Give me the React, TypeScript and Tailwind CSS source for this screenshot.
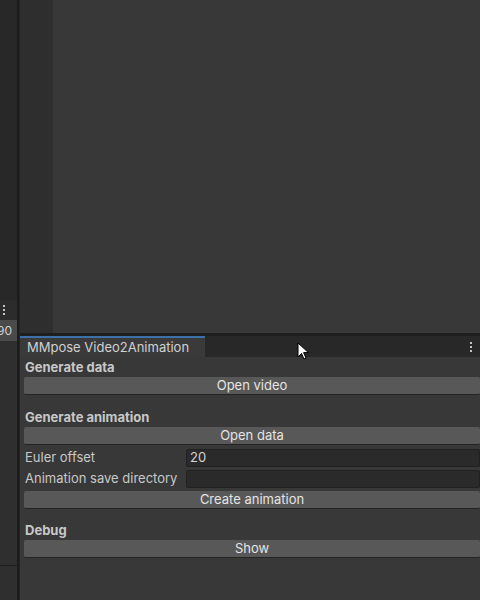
import React from "react";

const font = { fontFamily: "Inter, 'Noto Sans', sans-serif" };

function Btn({ label }: { label: string }) {
  return (
    <div className="h-[18px] ml-[4px] bg-[#585858] border-b border-[#242424] rounded-[2px] flex items-center justify-center text-[13px] text-[#e4e4e4] leading-none">
      {label}
    </div>
  );
}

function Field({ label, value }: { label: string; value: string }) {
  return (
    <div className="flex items-center h-[21px]">
      <div className="w-[166px] pl-[5px] text-[13px] text-[#c8c8c8] leading-none whitespace-nowrap">{label}</div>
      <div className="flex-1 h-[18px] bg-[#2a2a2a] border border-[#212121] rounded-[2px] flex items-center pl-[3px] text-[13px] text-[#d2d2d2] leading-none">
        {value}
      </div>
    </div>
  );
}

function Header({ label, h }: { label: string; h: string }) {
  return (
    <div className={`${h} flex items-center pl-[5px] text-[13px] font-bold text-[#c8c8c8] leading-none`}>
      {label}
    </div>
  );
}

export default function App() {
  return (
    <div className="w-[480px] h-[600px] flex bg-[#383838] overflow-hidden relative" style={font}>
      {/* left column */}
      <div className="w-[17px] flex flex-col shrink-0">
        <div className="h-[300px] bg-[#282828]" />
        <div className="h-[20px] bg-[#2c2c2c] flex items-center pl-[2px]">
          <svg width="4" height="12" viewBox="0 0 4 12">
            <rect x="1" y="1" width="2" height="2" fill="#c4c4c4" />
            <rect x="1" y="5" width="2" height="2" fill="#c4c4c4" />
            <rect x="1" y="9" width="2" height="2" fill="#c4c4c4" />
          </svg>
        </div>
        <div className="h-[21px] bg-[#4a4a4a] overflow-hidden flex items-center justify-end pr-[5px] text-[12px] text-[#d0d0d0] leading-none">
          90
        </div>
        <div className="h-[225px] bg-[#2f2f2f] border-b border-[#1e1e1e]" />
        <div className="flex-1 bg-[#2f2f2f]" />
      </div>
      {/* divider */}
      <div className="w-[3px] shrink-0 bg-[#1c1c1c] border-r border-[#242424]" />
      {/* main */}
      <div className="flex-1 flex flex-col min-w-0">
        <div className="h-[333px] flex">
          <div className="w-[33px] bg-[#2e2e2e]" />
          <div className="flex-1 bg-[#383838]" />
        </div>
        <div className="h-[3px] bg-[#1e1e1e]" />
        <div className="h-[21px] bg-[#282828] flex items-stretch">
          <div className="w-[185px] bg-[#3a3a3a] border-t-2 border-[#3d6fa8] flex items-center pl-[7px] text-[13px] text-[#d0d0d0] leading-none whitespace-nowrap">
            MMpose Video2Animation
          </div>
          <div className="flex-1" />
          <div className="w-[18px] flex items-center justify-center">
            <svg width="4" height="12" viewBox="0 0 4 12">
              <rect x="1" y="1" width="2" height="2" fill="#c4c4c4" />
              <rect x="1" y="5" width="2" height="2" fill="#c4c4c4" />
              <rect x="1" y="9" width="2" height="2" fill="#c4c4c4" />
            </svg>
          </div>
        </div>
        <div className="flex-1 bg-[#383838] flex flex-col pt-[1px]">
          <Header label="Generate data" h="h-[19px]" />
          <Btn label="Open video" />
          <div className="h-[12px]" />
          <Header label="Generate animation" h="h-[20px]" />
          <Btn label="Open data" />
          <div className="h-[2px]" />
          <Field label="Euler offset" value="20" />
          <Field label="Animation save directory" value="" />
          <div className="h-[2px]" />
          <Btn label="Create animation" />
          <div className="h-[11px]" />
          <Header label="Debug" h="h-[20px]" />
          <Btn label="Show" />
        </div>
      </div>
      {/* cursor */}
      <svg className="absolute left-[297px] top-[342px]" width="14" height="20" viewBox="0 0 14 20">
        <path d="M1 1 L1 15 L4.5 11.5 L7 17 L9 16 L6.6 10.6 L11.5 10.6 Z" fill="#ffffff" stroke="#000000" strokeWidth="1" strokeLinejoin="round" />
      </svg>
    </div>
  );
}
